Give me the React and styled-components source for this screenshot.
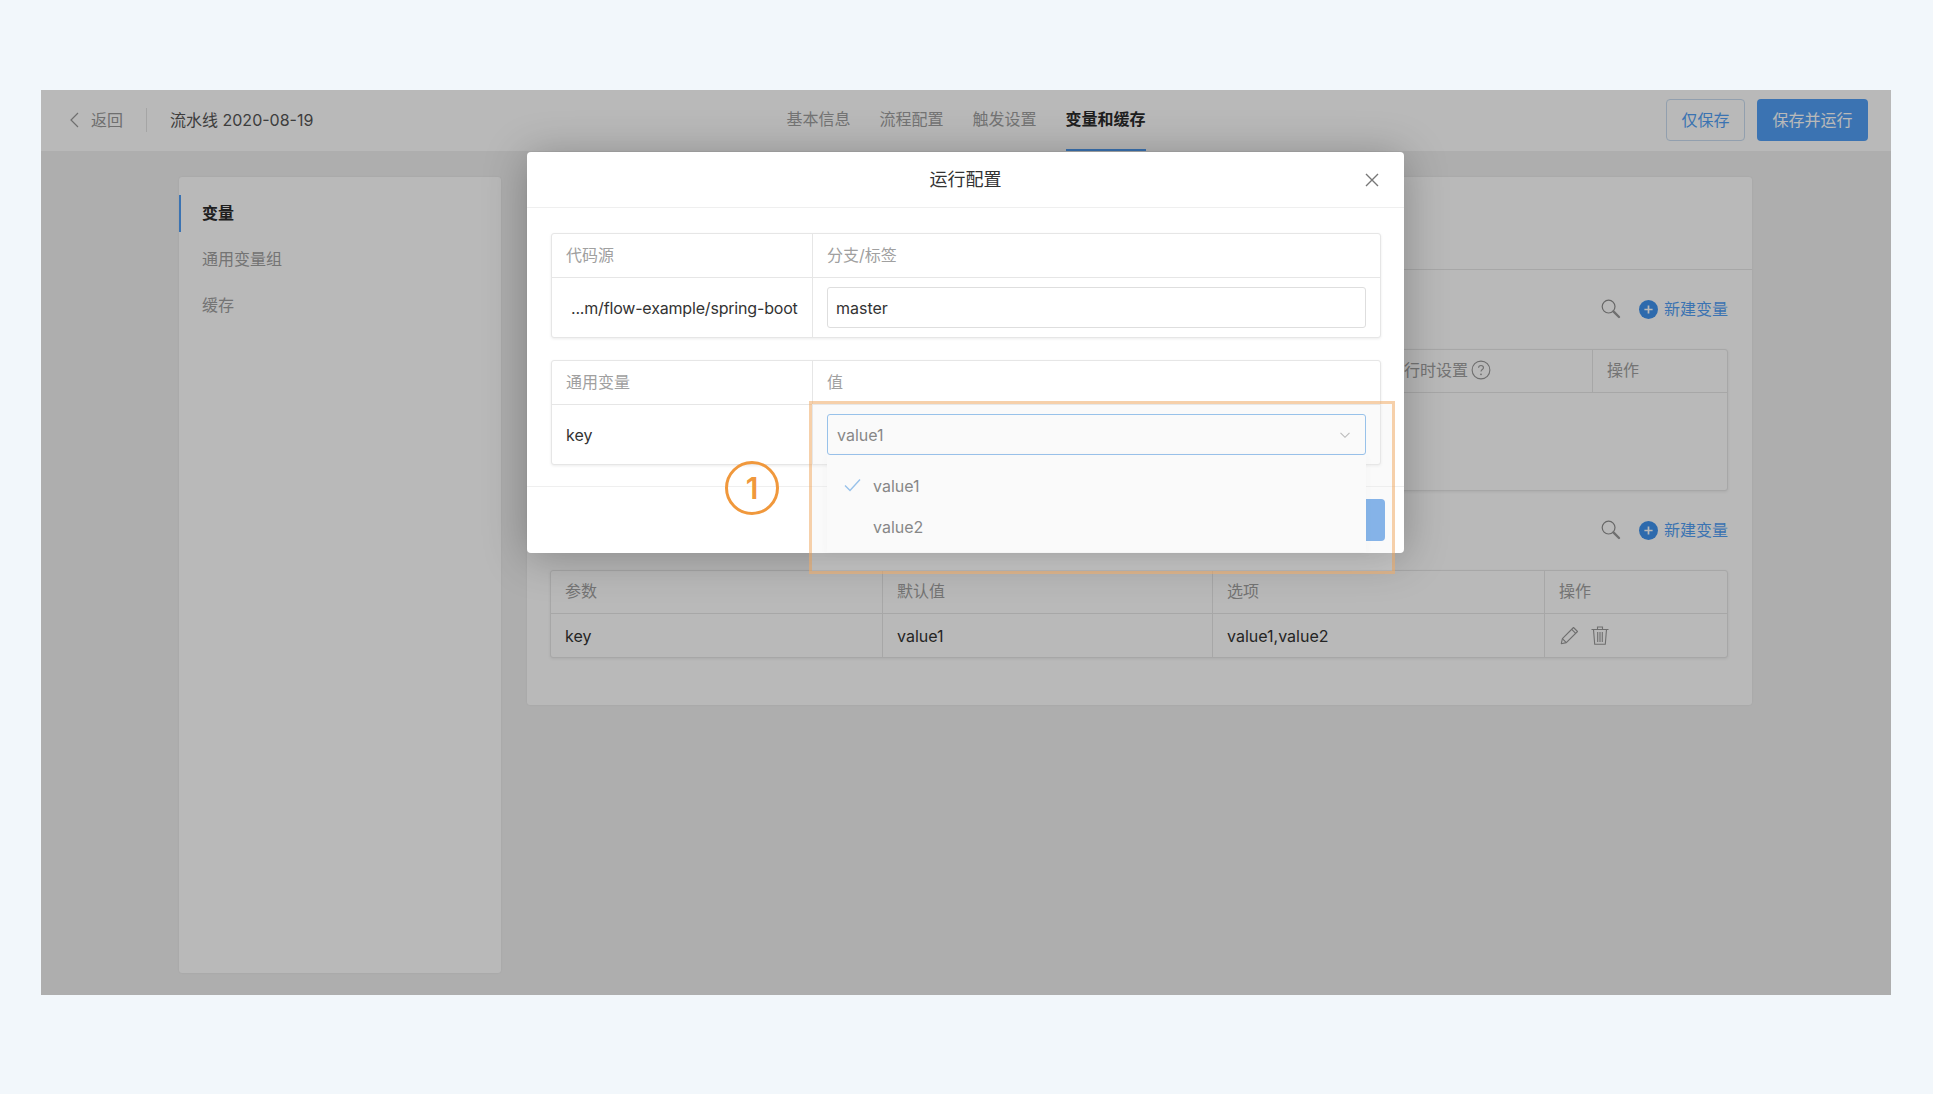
import React from 'react';
import styled, { createGlobalStyle } from 'styled-components';

const GlobalStyle = createGlobalStyle`
  html, body { margin: 0; padding: 0; background: #f2f7fb; }
  body { font-family: Inter, "Noto Sans CJK SC", sans-serif; font-size: 16px; line-height: 20px; color: #333; }
  * { box-sizing: border-box; }
`;

const Page = styled.div`
  width: 1933px;
  height: 1094px;
  padding: 90px 42px 99px 41px;
  background: #f2f7fb;
`;

const Frame = styled.div`
  position: relative;
  height: 905px;
  overflow: hidden;
  background: #f0f0f0;
  display: flex;
  flex-direction: column;
`;

const Header = styled.header`
  height: 61px;
  flex: none;
  background: #fff;
  display: grid;
  grid-template-columns: 1fr auto 1fr;
  align-items: center;
  padding: 0 23px 2px 23px;
`;

const HeaderLeft = styled.div`
  display: flex;
  align-items: center;
`;

const Back = styled.span`
  display: flex;
  align-items: center;
  gap: 12px;
  margin-left: 6px;
  color: #999;
`;

const VDivider = styled.span`
  width: 1px;
  height: 24px;
  background: #e4e4e4;
  margin: 0 23px 0 23px;
`;

const PipelineName = styled.span`
  color: #555;
`;

const Tabs = styled.nav`
  display: flex;
  gap: 29px;
  height: 61px;
  margin-bottom: -2px;
`;

const Tab = styled.span`
  display: flex;
  align-items: center;
  padding-bottom: 1px;
  color: ${p => (p.$active ? '#2c2c2c' : '#a0a0a0')};
  font-weight: ${p => (p.$active ? 600 : 400)};
  border-bottom: 2px solid ${p => (p.$active ? '#529ff5' : 'transparent')};
`;

const HeaderRight = styled.div`
  display: flex;
  justify-content: flex-end;
  gap: 12px;
`;

const SaveButton = styled.span`
  height: 42px;
  width: 79px;
  display: flex;
  align-items: center;
  justify-content: center;
  border: 1px solid #c9dcf0;
  border-radius: 4px;
  color: #529ff5;
`;

const RunButton = styled.span`
  height: 42px;
  width: 111px;
  display: flex;
  align-items: center;
  justify-content: center;
  border-radius: 4px;
  background: #529ff5;
  color: #fff;
`;

const Body = styled.div`
  display: flex;
  align-items: flex-start;
  gap: 26px;
  padding: 26px 0 0 138px;
`;

const Sidebar = styled.aside`
  width: 322px;
  height: 796px;
  flex: none;
  background: #fff;
  border-radius: 3px;
  padding-top: 13px;
  box-shadow: 0 0 2px rgba(0, 0, 0, 0.08);
`;

const SideItem = styled.div`
  position: relative;
  height: 46px;
  display: flex;
  align-items: center;
  padding-left: 23px;
  color: ${p => (p.$active ? '#2c2c2c' : '#a0a0a0')};
  font-weight: ${p => (p.$active ? 600 : 400)};
  &::before {
    content: '';
    display: ${p => (p.$active ? 'block' : 'none')};
    position: absolute;
    left: 0;
    top: 5px;
    width: 2px;
    height: 37px;
    background: #529ff5;
  }
`;

const Card = styled.main`
  width: 1225px;
  height: 528px;
  flex: none;
  background: #fff;
  border-radius: 3px;
  box-shadow: 0 0 2px rgba(0, 0, 0, 0.08);
`;

const CardTop = styled.div`
  height: 93px;
  border-bottom: 1px solid #e6e6e6;
`;

const Section = styled.section`
  padding: 0 24px 0 23px;
`;

const Toolbar = styled.div`
  height: ${p => p.$h}px;
  padding-bottom: 1px;
  display: flex;
  align-items: center;
  justify-content: flex-end;
  color: #529ff5;
`;

const ToolButton = styled.span`
  display: flex;
  align-items: center;
  gap: 6px;
  margin-left: 18px;
`;

const Table = styled.div`
  border: 1px solid #e6e6e6;
  border-radius: 3px;
  box-shadow: 0 1px 3px rgba(0, 0, 0, 0.08);
  background: #fff;
`;

const Row = styled.div`
  display: grid;
  grid-template-columns: ${p => p.$cols};
  height: ${p => p.$h}px;
  & + & { border-top: 1px solid #e6e6e6; }
`;

const Cell = styled.div`
  display: flex;
  align-items: center;
  gap: ${p => p.$gap || 0}px;
  padding-left: ${p => p.$pad || 14}px;
  padding-bottom: ${p => (p.$head ? 2 : 0)}px;
  color: ${p => (p.$head ? '#a0a0a0' : '#333')};
  white-space: nowrap;
  & + & { border-left: 1px solid #e6e6e6; }
`;

const SourcePath = styled.span`
  letter-spacing: -0.18px;
`;

const Overlay = styled.div`
  position: absolute;
  inset: 0;
  background: rgba(0, 0, 0, 0.275);
`;

const Modal = styled.div`
  position: absolute;
  left: 486px;
  top: 62px;
  width: 877px;
  height: 401px;
  isolation: isolate;
  background: #fff;
  border-radius: 4px;
  box-shadow: 0 4px 44px rgba(0, 0, 0, 0.28);
`;

const ModalHead = styled.div`
  position: relative;
  height: 56px;
  display: flex;
  align-items: center;
  justify-content: center;
  font-size: 18px;
  color: #333;
  border-bottom: 1px solid #efefef;
`;

const CloseIcon = styled.svg`
  position: absolute;
  right: 25px;
  top: 21px;
`;

const ModalBody = styled.div`
  padding: 25px 23px 21px 24px;
  display: flex;
  flex-direction: column;
  gap: 22px;
`;

const Input = styled.div`
  position: relative;
  width: 539px;
  height: 41px;
  display: flex;
  align-items: center;
  justify-content: space-between;
  padding: 0 14px 0 ${p => (p.$open ? 9 : 8)}px;
  border: 1px solid ${p => (p.$open ? '#7db4ea' : '#dedede')};
  border-radius: 3px;
  color: ${p => (p.$open ? '#666' : '#333')};
  background: #fff;
`;

const Menu = styled.div`
  position: absolute;
  left: -1px;
  right: -1px;
  top: 40px;
  height: 97px;
  padding-top: 10px;
  background: #fff;
  box-shadow: 0 2px 8px rgba(0, 0, 0, 0.04);
  z-index: 1;
`;

const MenuItem = styled.div`
  position: relative;
  height: 41px;
  display: flex;
  align-items: center;
  padding-left: 46px;
  color: #666;
`;

const CheckIcon = styled.svg`
  position: absolute;
  left: 17px;
  top: 13px;
`;

const ModalFoot = styled.div`
  height: 66px;
  border-top: 1px solid #efefef;
  display: flex;
  align-items: center;
  justify-content: flex-end;
  padding: 0 19px 0 0;
`;

const ConfirmButton = styled.span`
  width: 112px;
  height: 42px;
  border-radius: 4px;
  background: #63a1e7;
`;

const Highlight = styled.div`
  position: absolute;
  left: 768px;
  top: 311px;
  width: 586px;
  height: 173px;
  border: 3px solid rgba(240, 150, 60, 0.42);
  background: rgba(235, 235, 235, 0.25);
`;

const Marker = styled.div`
  position: absolute;
  left: 684px;
  top: 371px;
  width: 54px;
  height: 54px;
  border: 3px solid #f0983c;
  border-radius: 50%;
  display: flex;
  align-items: center;
  justify-content: center;
  color: #f0983c;
  font-size: 30px;
  font-weight: 600;
`;

const Chevron = ({ size = 12, color = '#aaa' }) => (
  <svg width={size} height={size} viewBox="0 0 12 12" fill="none">
    <path d="M1.5 3.8 6 8.3l4.5-4.5" stroke={color} strokeWidth="1.1" />
  </svg>
);

const SearchIcon = () => (
  <svg width="20" height="20" viewBox="0 0 20 20" fill="none">
    <circle cx="7.6" cy="7.6" r="6.4" stroke="#8f8f8f" strokeWidth="1.2" />
    <path d="M12.4 12.4l5.6 5.6" stroke="#9a9a9a" strokeWidth="2.4" strokeLinecap="round" />
  </svg>
);

const PlusIcon = () => (
  <svg width="19" height="19" viewBox="0 0 19 19">
    <circle cx="9.5" cy="9.5" r="9.5" fill="#3f93ef" />
    <path d="M9.5 5.4v8.2M5.4 9.5h8.2" stroke="#fff" strokeWidth="1.7" />
  </svg>
);

const HelpIcon = () => (
  <svg width="20" height="20" viewBox="0 0 18 18" fill="none">
    <circle cx="9" cy="9" r="8" stroke="#999" strokeWidth="1" />
    <path d="M6.800 7c0-1.300 1-2.100 2.200-2.100s2.200.8 2.200 2c0 1.700-2.200 1.700-2.200 3.500" stroke="#999" strokeWidth="1" />
    <circle cx="9" cy="12.900" r=".8" fill="#999" />
  </svg>
);

const PencilIcon = () => (
  <svg width="19" height="19" viewBox="0 0 19 19" fill="none" stroke="#999" strokeWidth="1.1" strokeLinejoin="round">
    <path d="M1.300 17.700l1.100-5L13.500 1.500l4 4L6.300 16.600z" />
    <path d="M2.400 12.700l3.900 3.900M11.700 3.300l4 4" />
  </svg>
);

const TrashIcon = () => (
  <svg width="18" height="19" viewBox="0 0 18 19" fill="none" stroke="#999" strokeWidth="1.1">
    <path d="M.5 3.500h17M6.500 3.500V1h5v2.500" />
    <path d="M2.500 3.500l1.200 14.700h10.600l1.200-14.700" />
    <path d="M6.700 6v10M9 6v10M11.300 6v10" />
  </svg>
);

const tabs = ['基本信息', '流程配置', '触发设置', '变量和缓存'];
const sideItems = ['变量', '通用变量组', '缓存'];

const NewVariable = () => (
  <>
    <SearchIcon />
    <ToolButton>
      <PlusIcon />
      新建变量
    </ToolButton>
  </>
);

const App = () => (
  <Page>
    <GlobalStyle />
    <Frame>
      <Header>
        <HeaderLeft>
          <Back>
            <svg width="9" height="16" viewBox="0 0 9 16" fill="none">
              <path d="M8 1 1 8l7 7" stroke="#999" strokeWidth="1.2" />
            </svg>
            返回
          </Back>
          <VDivider />
          <PipelineName>流水线 2020-08-19</PipelineName>
        </HeaderLeft>
        <Tabs>
          {tabs.map((t, i) => (
            <Tab key={t} $active={i === 3}>{t}</Tab>
          ))}
        </Tabs>
        <HeaderRight>
          <SaveButton>仅保存</SaveButton>
          <RunButton>保存并运行</RunButton>
        </HeaderRight>
      </Header>

      <Body>
        <Sidebar>
          {sideItems.map((s, i) => (
            <SideItem key={s} $active={i === 0}>{s}</SideItem>
          ))}
        </Sidebar>
        <Card>
          <CardTop />
          <Section>
            <Toolbar $h={79}>
              <NewVariable />
            </Toolbar>
            <Table>
              <Row $cols="822px 219px 1fr" $h={42}>
                <Cell $head />
                <Cell $head $gap={3}>运行时设置<HelpIcon /></Cell>
                <Cell $head>操作</Cell>
              </Row>
              <Row $cols="1fr" $h={98} />
            </Table>
            <Toolbar $h={79}>
              <NewVariable />
            </Toolbar>
            <Table>
              <Row $cols="331px 330px 332px 1fr" $h={42}>
                <Cell $head>参数</Cell>
                <Cell $head>默认值</Cell>
                <Cell $head>选项</Cell>
                <Cell $head>操作</Cell>
              </Row>
              <Row $cols="331px 330px 332px 1fr" $h={44}>
                <Cell>key</Cell>
                <Cell>value1</Cell>
                <Cell>value1,value2</Cell>
                <Cell $gap={12} $pad={15}><PencilIcon /><TrashIcon /></Cell>
              </Row>
            </Table>
          </Section>
        </Card>
      </Body>

      <Overlay />

      <Modal>
        <ModalHead>
          运行配置
          <CloseIcon width="14" height="14" viewBox="0 0 14 14" fill="none">
            <path d="M1 1l12 12M13 1 1 13" stroke="#777" strokeWidth="1.4" />
          </CloseIcon>
        </ModalHead>
        <ModalBody>
          <Table>
            <Row $cols="260px 1fr" $h={43}>
              <Cell $head>代码源</Cell>
              <Cell $head>分支/标签</Cell>
            </Row>
            <Row $cols="260px 1fr" $h={60}>
              <Cell $pad={19}><SourcePath>...m/flow-example/spring-boot</SourcePath></Cell>
              <Cell><Input>master</Input></Cell>
            </Row>
          </Table>
          <Table>
            <Row $cols="260px 1fr" $h={43}>
              <Cell $head>通用变量</Cell>
              <Cell $head>值</Cell>
            </Row>
            <Row $cols="260px 1fr" $h={60}>
              <Cell>key</Cell>
              <Cell>
                <Input $open>
                  value1
                  <Chevron />
                  <Menu>
                    <MenuItem>
                      <CheckIcon width="17" height="14" viewBox="0 0 17 14" fill="none">
                        <path d="M1 7.500 6 12.500 16 1.500" stroke="#7db4ea" strokeWidth="1.400" />
                      </CheckIcon>
                      value1
                    </MenuItem>
                    <MenuItem>value2</MenuItem>
                  </Menu>
                </Input>
              </Cell>
            </Row>
          </Table>
        </ModalBody>
        <ModalFoot>
          <ConfirmButton />
        </ModalFoot>
      </Modal>

      <Highlight />
      <Marker>1</Marker>
    </Frame>
  </Page>
);

export default App;
